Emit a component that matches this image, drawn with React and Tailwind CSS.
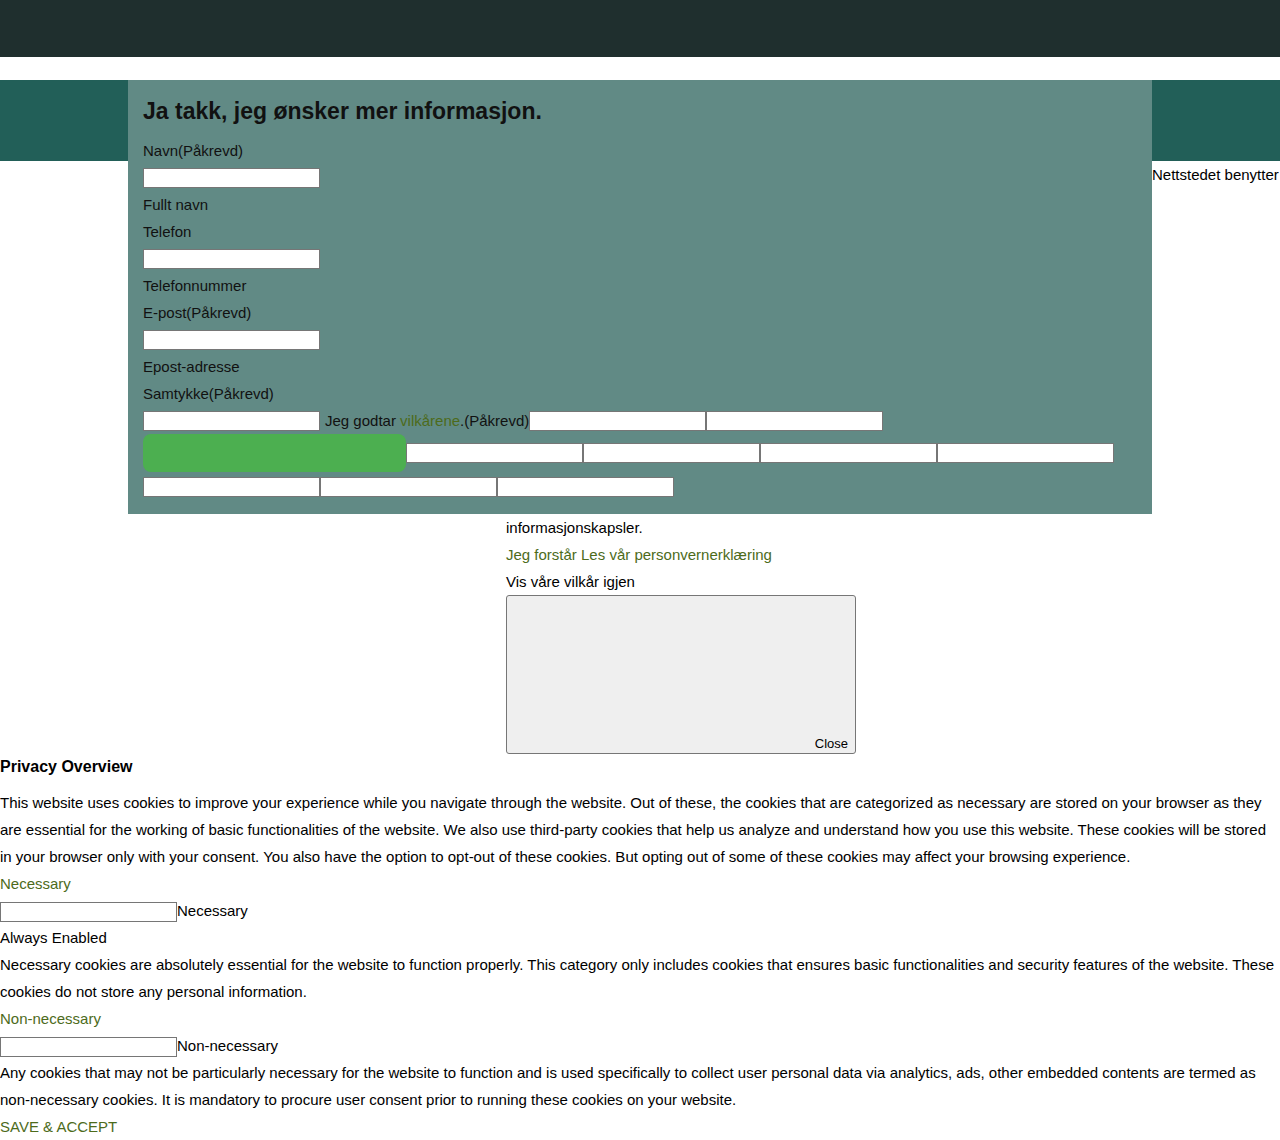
const fontStack = "font-['Liberation_Sans',Arial,sans-serif]";

function Field({ className = '' }) {
  return (
    <input
      type="text"
      className={`block h-[20px] w-[177px] shrink-0 border border-[#767676] bg-white ${className}`}
    />
  );
}

export default function App() {
  return (
    <div className={`${fontStack} min-h-[1140px] w-[1280px] bg-white text-[15px] leading-[27px] text-black`}>
      {/* top bar */}
      <div className="h-[57px] bg-[#1f2f2e]"></div>
      <div className="h-[23px]"></div>

      {/* contact band */}
      <div className="flex">
        <div className="w-[128px] shrink-0">
          <div className="h-[81px] bg-[#225f58]"></div>
        </div>

        <div className="w-[1024px] shrink-0 bg-[#618a85] px-[15px] pt-[15px] pb-[17px] text-[#111]">
          <h3 className="mb-[10px] text-[23px] font-bold leading-[32px]">
            Ja takk, jeg ønsker mer informasjon.
          </h3>

          <div>Navn(Påkrevd)</div>
          <div className="flex h-[27px] items-center">
            <Field />
          </div>
          <div>Fullt navn</div>
          <div>Telefon</div>
          <div className="flex h-[27px] items-center">
            <Field />
          </div>
          <div>Telefonnummer</div>
          <div>E-post(Påkrevd)</div>
          <div className="flex h-[27px] items-center">
            <Field />
          </div>
          <div>Epost-adresse</div>
          <div>Samtykke(Påkrevd)</div>

          <div className="flex h-[27px] items-center">
            <Field />
            <span className="pl-[5px]">
              Jeg godtar <a className="text-[#4d6b1b]">vilkårene</a>.(Påkrevd)
            </span>
            <Field />
            <Field />
          </div>

          <div className="flex items-center">
            <button className="h-[38px] w-[263px] shrink-0 rounded-[8px] bg-[#4caf50]"></button>
            <div className="flex">
              <Field />
              <Field />
              <Field />
              <Field />
            </div>
          </div>

          <div className="flex pt-[5px]">
            <Field />
            <Field />
            <Field />
          </div>
        </div>

        <div className="w-[128px] shrink-0">
          <div className="h-[81px] bg-[#225f58]"></div>
          <div className="whitespace-nowrap">Nettstedet benytter</div>
        </div>
      </div>

      {/* cookie notice */}
      <div className="pl-[506px]">
        <div>informasjonskapsler.</div>
        <div className="text-[#4d6b1b]">Jeg forstår Les vår personvernerklæring</div>
        <div>Vis våre vilkår igjen</div>
        <div className="flex h-[159px] w-[350px] flex-col items-end justify-end rounded-[3px] border border-[#767676] bg-[#efefef] pr-[7px] pb-[2px]">
          <span className="text-[13px] leading-[15px]">Close</span>
        </div>
      </div>

      {/* privacy overview */}
      <div>
        <h4 className="text-[16px] font-bold leading-[25px]">Privacy Overview</h4>
        <p className="mt-[10px]">
          This website uses cookies to improve your experience while you navigate through the website. Out of these, the cookies that are categorized as necessary are stored on your browser as they are essential for the working of basic functionalities of the website. We also use third-party cookies that help us analyze and understand how you use this website. These cookies will be stored in your browser only with your consent. You also have the option to opt-out of these cookies. But opting out of some of these cookies may affect your browsing experience.
        </p>
        <div className="text-[#4d6b1b]">Necessary</div>
        <div className="flex items-start">
          <Field className="mt-[5px]" />
          <span>Necessary</span>
        </div>
        <div>Always Enabled</div>
        <p>
          Necessary cookies are absolutely essential for the website to function properly. This category only includes cookies that ensures basic functionalities and security features of the website. These cookies do not store any personal information.
        </p>
        <div className="text-[#4d6b1b]">Non-necessary</div>
        <div className="flex items-start">
          <Field className="mt-[5px]" />
          <span>Non-necessary</span>
        </div>
        <p>
          Any cookies that may not be particularly necessary for the website to function and is used specifically to collect user personal data via analytics, ads, other embedded contents are termed as non-necessary cookies. It is mandatory to procure user consent prior to running these cookies on your website.
        </p>
        <div className="text-[#4d6b1b]">SAVE &amp; ACCEPT</div>
      </div>
    </div>
  );
}
